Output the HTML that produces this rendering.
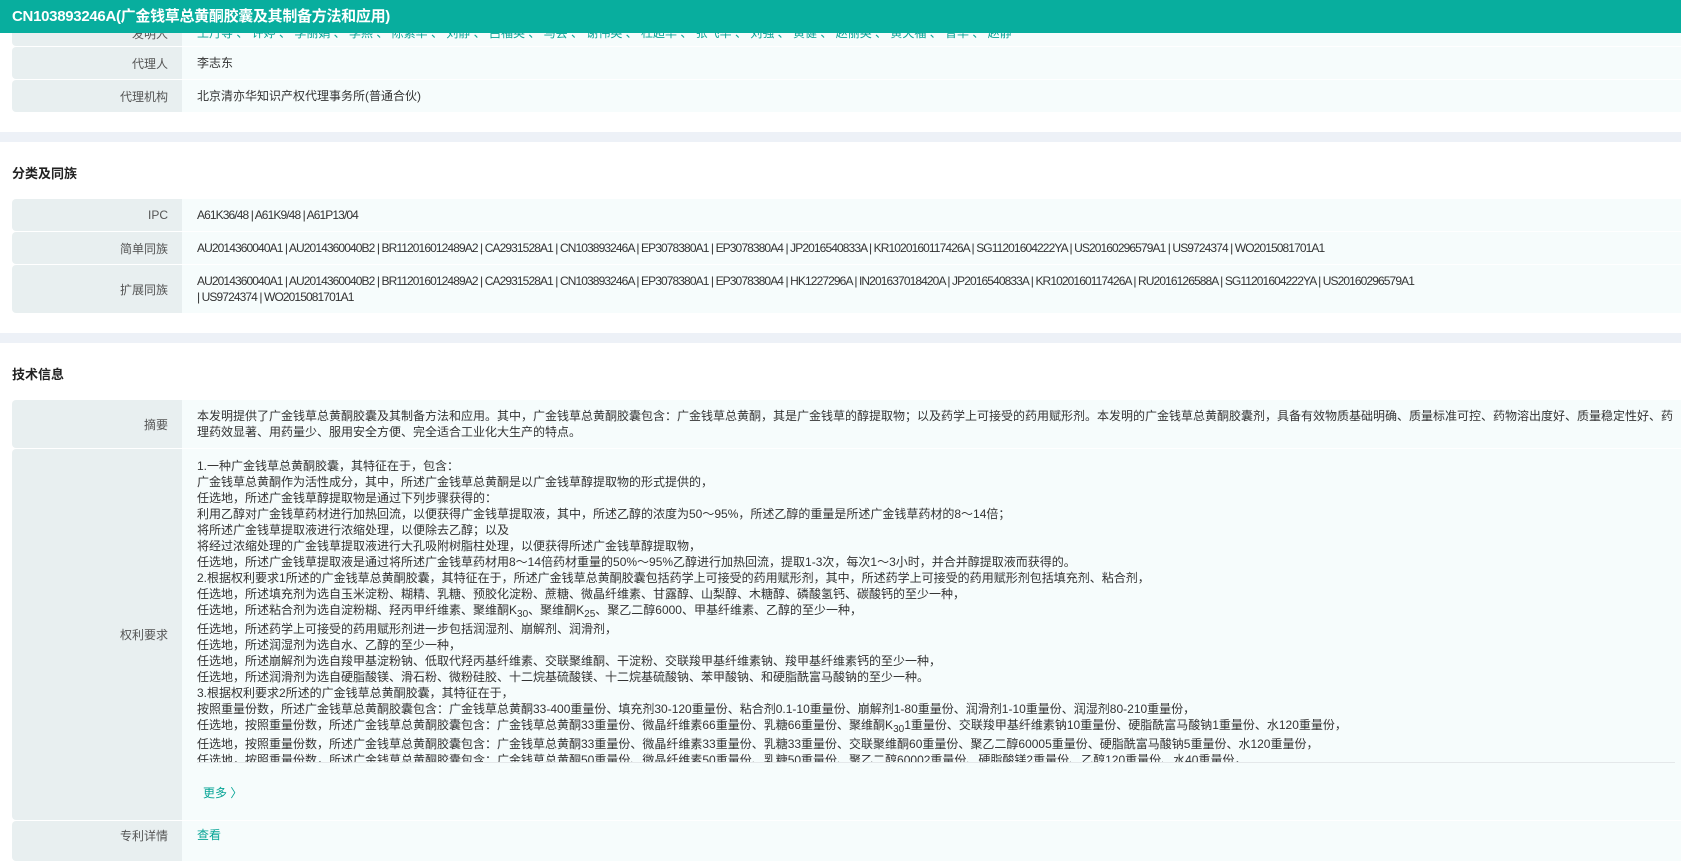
<!DOCTYPE html>
<html><head><meta charset="utf-8"><style>
*{margin:0;padding:0;box-sizing:border-box}
body{width:1681px;height:849px;overflow:hidden;background:#fff;font-family:"Liberation Sans","Noto Sans CJK SC",sans-serif;font-size:12px;color:#333;position:relative}
.hd{position:absolute;left:0;top:0;width:1681px;height:33px;background:#08ae9e;color:#fff;font-weight:bold;font-size:15px;line-height:33px;padding-left:12px;z-index:5;letter-spacing:-0.3px}
.row{position:absolute;left:12px;right:0;display:flex}
.lb{width:170px;background:#e8eff0;color:#555;text-align:right;padding-right:14px;display:flex;align-items:center;justify-content:flex-end;border-radius:4px 0 0 4px}
.ct{flex:1;background:#f6fcfc;padding:0 6px 0 15px;display:flex;align-items:center;line-height:16px}
.nar{letter-spacing:-0.9px}
.band{position:absolute;left:0;width:1681px;height:10px;background:#edf1f7}
.st{position:absolute;left:12px;font-size:13px;font-weight:bold;color:#222}
.claims{line-height:16px;white-space:nowrap}
.claims sub{font-size:10px;vertical-align:-3px;line-height:0}
a{color:#08a596;text-decoration:none}
</style></head><body>
<div class="hd">CN103893246A(广金钱草总黄酮胶囊及其制备方法和应用)</div>
<div class="row" style="top:0;height:46px"><div class="lb" style="padding-top:20px">发明人</div><div class="ct" style="padding-top:20px;color:#08a596">王丹等 、 许婷 、 李丽娟 、 李燕 、 陈素华 、 刘静 、 吕福英 、 马芸 、 谢伟英 、 杜超华 、 张飞华 、 刘强 、 黄健 、 赵丽英 、 黄天福 、 曾华 、 赵静</div></div>
<div class="row" style="top:47px;height:32px"><div class="lb">代理人</div><div class="ct">李志东</div></div>
<div class="row" style="top:80px;height:32px"><div class="lb">代理机构</div><div class="ct">北京清亦华知识产权代理事务所(普通合伙)</div></div>
<div class="band" style="top:132px"></div>
<div class="st" style="top:163px">分类及同族</div>
<div class="row" style="top:199px;height:32px"><div class="lb">IPC</div><div class="ct nar">A61K36/48 | A61K9/48 | A61P13/04</div></div>
<div class="row" style="top:232px;height:32px"><div class="lb">简单同族</div><div class="ct nar">AU2014360040A1 | AU2014360040B2 | BR112016012489A2 | CA2931528A1 | CN103893246A | EP3078380A1 | EP3078380A4 | JP2016540833A | KR1020160117426A | SG11201604222YA | US20160296579A1 | US9724374 | WO2015081701A1</div></div>
<div class="row" style="top:265px;height:48px"><div class="lb">扩展同族</div><div class="ct nar">AU2014360040A1 | AU2014360040B2 | BR112016012489A2 | CA2931528A1 | CN103893246A | EP3078380A1 | EP3078380A4 | HK1227296A | IN201637018420A | JP2016540833A | KR1020160117426A | RU2016126588A | SG11201604222YA | US20160296579A1<br>| US9724374 | WO2015081701A1</div></div>
<div class="band" style="top:333px"></div>
<div class="st" style="top:364px">技术信息</div>
<div class="row" style="top:400px;height:48px"><div class="lb">摘要</div><div class="ct">本发明提供了广金钱草总黄酮胶囊及其制备方法和应用。其中，广金钱草总黄酮胶囊包含：广金钱草总黄酮，其是广金钱草的醇提取物；以及药学上可接受的药用赋形剂。本发明的广金钱草总黄酮胶囊剂，具备有效物质基础明确、质量标准可控、药物溶出度好、质量稳定性好、药理药效显著、用药量少、服用安全方便、完全适合工业化大生产的特点。</div></div>
<div class="row" style="top:449px;height:371px"><div class="lb">权利要求</div><div class="ct" style="display:block;padding-top:9px">
<div class="claims" style="height:305px;overflow:hidden;border-bottom:1px solid #e4e8ea">
1.一种广金钱草总黄酮胶囊，其特征在于，包含：<br>
广金钱草总黄酮作为活性成分，其中，所述广金钱草总黄酮是以广金钱草醇提取物的形式提供的，<br>
任选地，所述广金钱草醇提取物是通过下列步骤获得的：<br>
利用乙醇对广金钱草药材进行加热回流，以便获得广金钱草提取液，其中，所述乙醇的浓度为50～95%，所述乙醇的重量是所述广金钱草药材的8～14倍；<br>
将所述广金钱草提取液进行浓缩处理，以便除去乙醇；以及<br>
将经过浓缩处理的广金钱草提取液进行大孔吸附树脂柱处理，以便获得所述广金钱草醇提取物，<br>
任选地，所述广金钱草提取液是通过将所述广金钱草药材用8～14倍药材重量的50%～95%乙醇进行加热回流，提取1-3次，每次1～3小时，并合并醇提取液而获得的。<br>
2.根据权利要求1所述的广金钱草总黄酮胶囊，其特征在于，所述广金钱草总黄酮胶囊包括药学上可接受的药用赋形剂，其中，所述药学上可接受的药用赋形剂包括填充剂、粘合剂，<br>
任选地，所述填充剂为选自玉米淀粉、糊精、乳糖、预胶化淀粉、蔗糖、微晶纤维素、甘露醇、山梨醇、木糖醇、磷酸氢钙、碳酸钙的至少一种，<br>
任选地，所述粘合剂为选自淀粉糊、羟丙甲纤维素、聚维酮K<sub>30</sub>、聚维酮K<sub>25</sub>、聚乙二醇6000、甲基纤维素、乙醇的至少一种，<br>
<div style="height:3px"></div>
任选地，所述药学上可接受的药用赋形剂进一步包括润湿剂、崩解剂、润滑剂，<br>
任选地，所述润湿剂为选自水、乙醇的至少一种，<br>
任选地，所述崩解剂为选自羧甲基淀粉钠、低取代羟丙基纤维素、交联聚维酮、干淀粉、交联羧甲基纤维素钠、羧甲基纤维素钙的至少一种，<br>
任选地，所述润滑剂为选自硬脂酸镁、滑石粉、微粉硅胶、十二烷基硫酸镁、十二烷基硫酸钠、苯甲酸钠、和硬脂酰富马酸钠的至少一种。<br>
3.根据权利要求2所述的广金钱草总黄酮胶囊，其特征在于，<br>
按照重量份数，所述广金钱草总黄酮胶囊包含：广金钱草总黄酮33-400重量份、填充剂30-120重量份、粘合剂0.1-10重量份、崩解剂1-80重量份、润滑剂1-10重量份、润湿剂80-210重量份，<br>
任选地，按照重量份数，所述广金钱草总黄酮胶囊包含：广金钱草总黄酮33重量份、微晶纤维素66重量份、乳糖66重量份、聚维酮K<sub>30</sub>1重量份、交联羧甲基纤维素钠10重量份、硬脂酰富马酸钠1重量份、水120重量份，<br>
<div style="height:3px"></div>
任选地，按照重量份数，所述广金钱草总黄酮胶囊包含：广金钱草总黄酮33重量份、微晶纤维素33重量份、乳糖33重量份、交联聚维酮60重量份、聚乙二醇60005重量份、硬脂酰富马酸钠5重量份、水120重量份，<br>
任选地，按照重量份数，所述广金钱草总黄酮胶囊包含：广金钱草总黄酮50重量份、微晶纤维素50重量份、乳糖50重量份、聚乙二醇60002重量份、硬脂酸镁2重量份、乙醇120重量份、水40重量份，
</div>
<div style="margin-top:22px;padding-left:6px"><a>更多 〉</a></div>
</div></div>
<div class="row" style="top:821px;height:40px"><div class="lb" style="align-items:flex-start;padding-top:6px">专利详情</div><div class="ct" style="align-items:flex-start;padding-top:6px"><a>查看</a></div></div>
</body></html>
